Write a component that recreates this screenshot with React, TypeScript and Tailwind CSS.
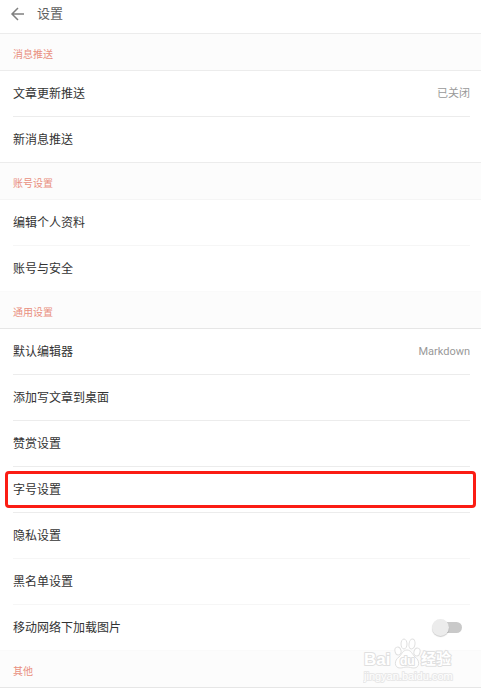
import { useState } from "react";

interface Row {
  label: string;
  value?: string;
  toggle?: boolean;
  highlighted?: boolean;
  faint?: boolean;
}

interface Section {
  title: string;
  topLine: string;
  bottomLine: string;
  rows: Row[];
}

const SECTIONS: Section[] = [
  {
    title: "消息推送",
    topLine: "border-t-[#ececec]",
    bottomLine: "border-b-[#ececec]",
    rows: [{ label: "文章更新推送", value: "已关闭" }, { label: "新消息推送" }],
  },
  {
    title: "账号设置",
    topLine: "border-t-[#ececec]",
    bottomLine: "border-b-[#f5f5f5]",
    rows: [{ label: "编辑个人资料", faint: true }, { label: "账号与安全" }],
  },
  {
    title: "通用设置",
    topLine: "border-t-[#fafafa]",
    bottomLine: "border-b-[#e6e6e6]",
    rows: [
      { label: "默认编辑器", value: "Markdown" },
      { label: "添加写文章到桌面" },
      { label: "赞赏设置" },
      { label: "字号设置", highlighted: true },
      { label: "隐私设置", faint: true },
      { label: "黑名单设置", faint: true },
      { label: "移动网络下加载图片", toggle: true },
    ],
  },
  {
    title: "其他",
    topLine: "border-t-[#fafafa]",
    bottomLine: "border-b-[#e6e6e6]",
    rows: [],
  },
];

function Toggle({ label }: { label: string }) {
  const [on, setOn] = useState(false);

  return (
    <span className="flex h-5 w-[30px] items-center">
      <input
        type="checkbox"
        role="switch"
        aria-label={label}
        checked={on}
        onChange={(e) => setOn(e.target.checked)}
        className="relative ml-1 h-[11px] w-[26px] cursor-pointer appearance-none rounded-full bg-[#c9c9c9] before:absolute before:-top-[3px] before:-left-1 before:size-[17px] before:rounded-full before:bg-[#ececec] before:shadow-[0_1px_1px_rgba(0,0,0,0.2)] checked:bg-[#f3b5a8] checked:before:left-[14px] checked:before:bg-[#ea6f5a]"
      />
    </span>
  );
}

function SettingRow({ row, last }: { row: Row; last: boolean }) {
  const line = last ? "" : row.faint ? "border-b border-[#f6f6f6]" : "border-b border-[#ececec]";
  const height = last ? "h-[45px]" : "h-[46px]";
  const inner = `flex w-full items-center justify-between text-left ${height} ${line}`;

  return (
    <li className="relative pr-[11px] pl-[13px]">
      {row.toggle ? (
        <div className={inner}>
          <span>{row.label}</span>
          <span className="mr-2">
            <Toggle label={row.label} />
          </span>
        </div>
      ) : (
        <button type="button" className={inner}>
          <span>{row.label}</span>
          {row.value && <span className="text-[11px] text-[#999999]">{row.value}</span>}
        </button>
      )}
      {row.highlighted && (
        <span className="pointer-events-none absolute inset-x-[5px] top-1 bottom-[5px] rounded-[4px] border-3 border-[#fb1d14]" />
      )}
    </li>
  );
}

function Watermark() {
  return (
    <svg
      viewBox="0 0 92 46"
      className="pointer-events-none absolute right-[26px] bottom-1 h-[46px] w-[92px]"
      fontFamily="'Liberation Sans', 'Noto Sans CJK SC', sans-serif"
      fontWeight="bold"
      fill="#ffffff"
      stroke="#e0e0e0"
      strokeWidth="2"
      strokeLinejoin="round"
      aria-hidden="true"
    >
      <text x="1" y="27" fontSize="17" paintOrder="stroke">
        Bai
      </text>
      {/* paw print with the "du" pad */}
      <g strokeWidth="1">
        <path d="M44 12c4 0 5 4 8 7 5 3 5 11-1 11-3 0-4-1-7-1s-4 1-7 1c-6 0-6-8-1-11 3-3 4-7 8-7z" />
        <ellipse cx="35" cy="13" rx="3" ry="4" transform="rotate(-15 35 13)" />
        <ellipse cx="41" cy="6" rx="3" ry="5" />
        <ellipse cx="49" cy="6" rx="3" ry="5" transform="rotate(8 49 6)" />
        <ellipse cx="54" cy="14" rx="3" ry="4" transform="rotate(15 54 14)" />
      </g>
      <text x="37" y="27" fontSize="12" paintOrder="stroke">
        du
      </text>
      <text x="58" y="26" fontSize="15" paintOrder="stroke">
        经验
      </text>
      <text x="1" y="42" fontSize="11" fontWeight="normal" stroke="#e8e8e8" paintOrder="stroke">
        jingyan.baidu.com
      </text>
    </svg>
  );
}

export default function App() {
  return (
    <div className="bg-white font-['Roboto','Noto_Sans_CJK_SC',sans-serif] text-[12px] leading-4 text-[#333333]">
      <header className="flex h-[33px] items-center pb-[5px] pl-[10px]">
        <button type="button" aria-label="返回" className="text-[#808080]">
          <svg
            viewBox="0 0 15 14"
            className="h-[14px] w-[15px]"
            fill="none"
            stroke="currentColor"
            strokeWidth="1.5"
          >
            <path d="M14 7H2M8 1L2 7l6 6" />
          </svg>
        </button>
        <h1 className="ml-3 text-[13px] text-[#606060]">设置</h1>
      </header>

      <main className="relative">
        {SECTIONS.map((section) => (
          <section key={section.title}>
            <h2
              className={`flex h-[38px] items-center border-y bg-[#fcfcfc] pt-[6px] pl-[13px] text-[10px] text-[#e98f80] ${section.topLine} ${section.bottomLine}`}
            >
              {section.title}
            </h2>
            <ul>
              {section.rows.map((row, i) => (
                <SettingRow
                  key={row.label}
                  row={row}
                  last={i === section.rows.length - 1}
                />
              ))}
            </ul>
          </section>
        ))}
        <Watermark />
      </main>
    </div>
  );
}
